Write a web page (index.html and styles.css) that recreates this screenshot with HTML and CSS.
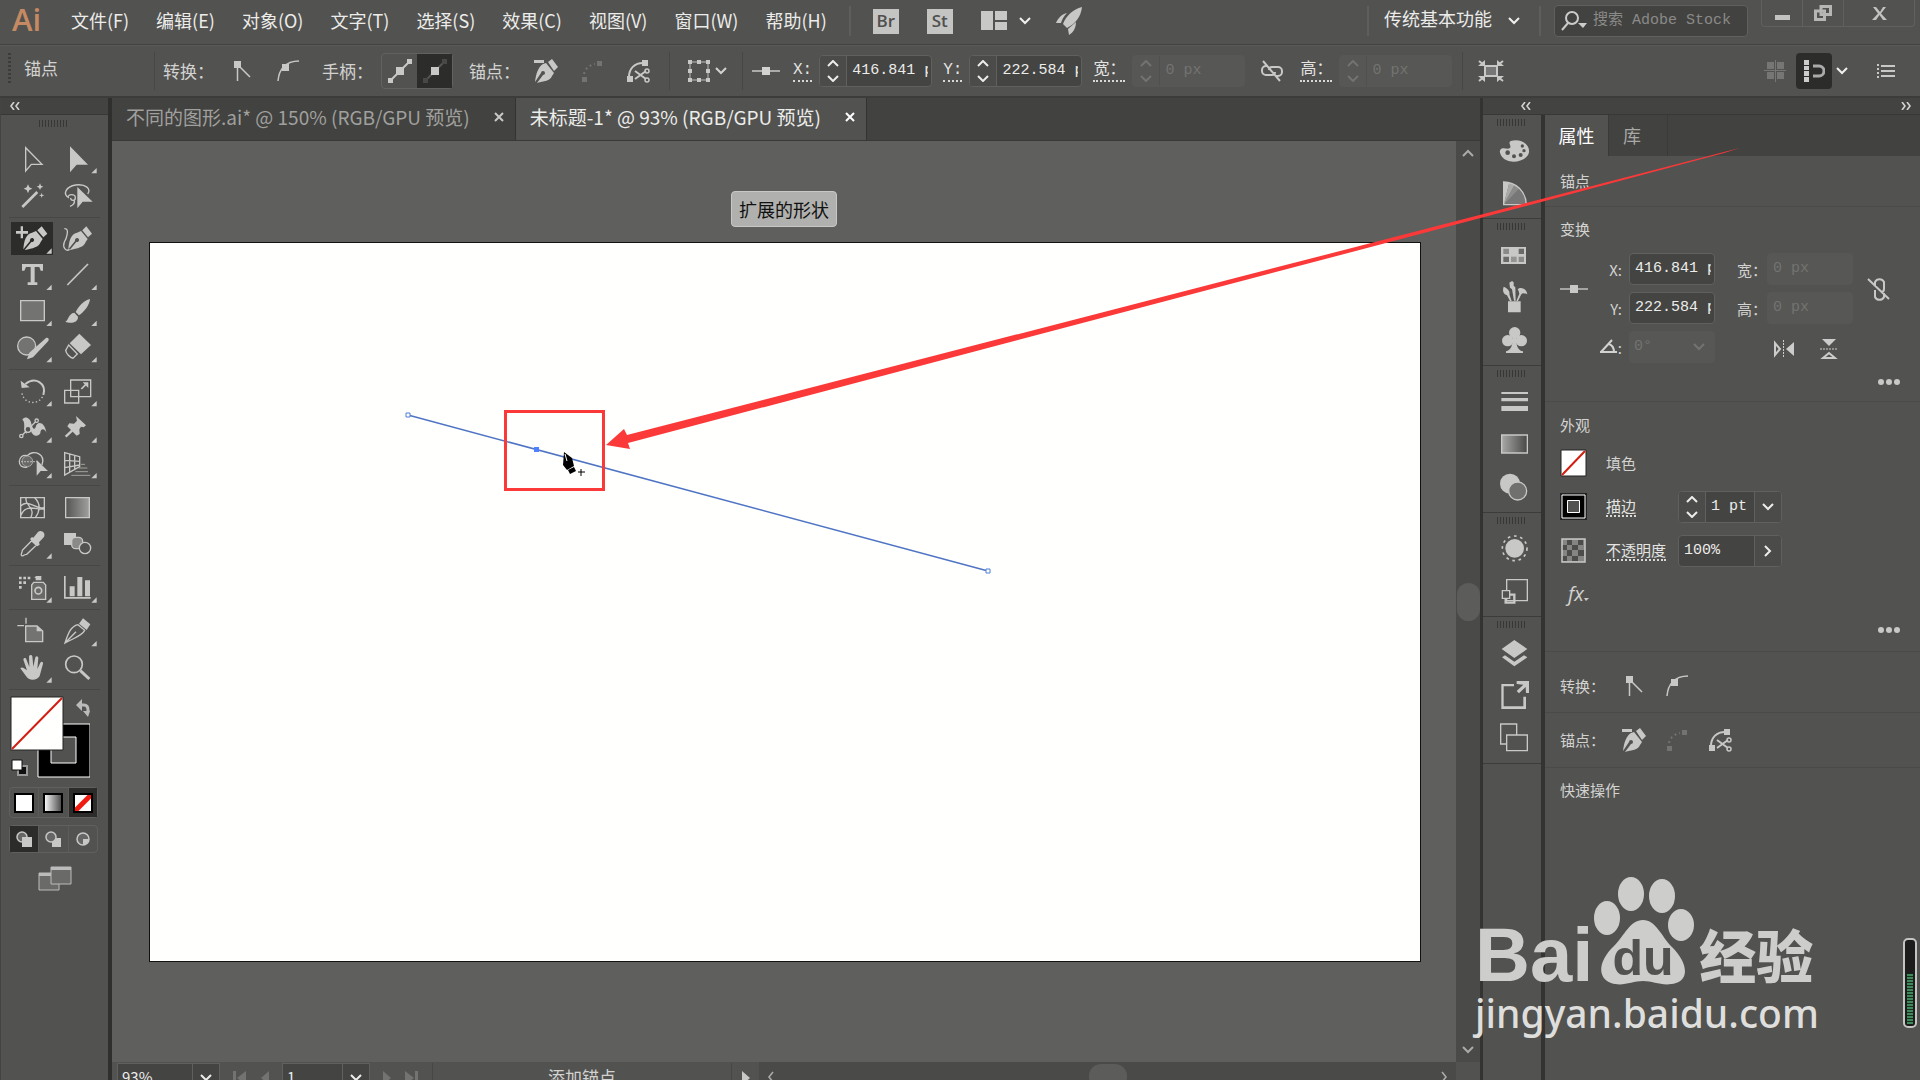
FILE: index.html
```html
<!DOCTYPE html>
<html lang="zh-CN">
<head>
  <meta charset="UTF-8">
  <meta name="viewport" content="width=device-width, initial-scale=1.0">
  <title>未标题-1* @ 93% (RGB/GPU 预览)</title>
  <link rel="stylesheet" href="styles.css">
</head>
<body>

<!-- shared icons -->
<svg class="sprite" aria-hidden="true">
  <symbol id="chev-down" viewBox="0 0 12 8"><path d="M1 1l5 5 5-5" fill="none" stroke="currentColor" stroke-width="2"/></symbol>
  <symbol id="chev-up" viewBox="0 0 12 8"><path d="M1 7l5-5 5 5" fill="none" stroke="currentColor" stroke-width="2"/></symbol>
  <symbol id="chev-left" viewBox="0 0 8 12"><path d="M6 1L2 6l4 5" fill="none" stroke="currentColor" stroke-width="1.6"/></symbol>
  <symbol id="chev-right" viewBox="0 0 8 12"><path d="M2 1l4 5-4 5" fill="none" stroke="currentColor" stroke-width="1.6"/></symbol>
  <symbol id="spin" viewBox="0 0 12 22"><path d="M1 6l5-5 5 5M1 16l5 5 5-5" fill="none" stroke="currentColor" stroke-width="2"/></symbol>
  <symbol id="dbl-left" viewBox="0 0 12 8"><path d="M5 0L2 4l3 4M10 0L7 4l3 4" fill="none" stroke="currentColor" stroke-width="1.6"/></symbol>
  <symbol id="dbl-right" viewBox="0 0 12 8"><path d="M2 0l3 4-3 4M7 0l3 4-3 4" fill="none" stroke="currentColor" stroke-width="1.6"/></symbol>
  <symbol id="corner" viewBox="0 0 24 24"><path d="M4 2h7v7H4z" fill="currentColor"/><path d="M7.500 8v14M9 7l11 11" fill="none" stroke="currentColor" stroke-width="1.500"/></symbol>
  <symbol id="smooth" viewBox="0 0 24 24"><path d="M6 5h7v7H6z" fill="currentColor"/><path d="M2 22C3 11 9 2 23 2" fill="none" stroke="currentColor" stroke-width="1.500"/></symbol>
  <symbol id="pen-minus" viewBox="0 0 24 24"><path d="M0 1h10v3H0zM14 3l4-3 6 8-4 4zM12 4l8 10-2 3c-2 5-8 5-15 7l6-8a2 2 0 1 0-2-2l-6 9C2 15 4 8 9 5z" fill="currentColor"/></symbol>
  <symbol id="connect" viewBox="0 0 24 24"><path d="M17 2h5v5h-5zM2 18h5v5H2z" fill="currentColor"/><path d="M4 15C5 10 9 6 15 5" fill="none" stroke="currentColor" stroke-width="2" stroke-dasharray="2 3"/></symbol>
  <symbol id="cut-path" viewBox="0 0 24 24"><path d="M16 1h6v6h-6zM1 17h6v6H1z" fill="currentColor"/><path d="M3 18C3 9 9 4 17 4M9 12l11 8M9 20l11-8" fill="none" stroke="currentColor" stroke-width="2"/><circle cx="21" cy="12" r="2" fill="none" stroke="currentColor" stroke-width="1.500"/><circle cx="21" cy="21" r="2" fill="none" stroke="currentColor" stroke-width="1.500"/></symbol>
  <symbol id="refpoint" viewBox="0 0 28 12"><path d="M0 5h28v2H0z" opacity=".7" fill="currentColor"/><path d="M10 2h8v8h-8z" fill="currentColor"/></symbol>
  <symbol id="unlink" viewBox="0 0 24 24"><path d="M8 7H6a4 4 0 0 0-4 4v1a4 4 0 0 0 4 4h6a3 3 0 0 0 3-3M16 17h2a4 4 0 0 0 4-4v-1a4 4 0 0 0-4-4h-6a3 3 0 0 0-3 3M3 2l17 20" fill="none" stroke="currentColor" stroke-width="2"/></symbol>
  <symbol id="more" viewBox="0 0 22 8"><circle cx="3" cy="4" r="3" fill="currentColor"/><circle cx="11" cy="4" r="3" fill="currentColor"/><circle cx="19" cy="4" r="3" fill="currentColor"/></symbol>
</svg>

<div class="app">

  <header class="menu-bar">
    <span class="logo">Ai</span>
    <nav class="menu">
      <a href="#">文件(F)</a>
      <a href="#">编辑(E)</a>
      <a href="#">对象(O)</a>
      <a href="#">文字(T)</a>
      <a href="#">选择(S)</a>
      <a href="#">效果(C)</a>
      <a href="#">视图(V)</a>
      <a href="#">窗口(W)</a>
      <a href="#">帮助(H)</a>
    </nav>
    <div class="app-links">
      <button class="app-link">Br</button>
      <button class="app-link">St</button>
      <button class="plain arrange" aria-label="排列文档">
        <svg width="26" height="20" viewBox="0 0 26 20"><path d="M0 0h12v19H0zM14 0h12v9H14zM14 11h12v8H14z" fill="#c8c8c6"/></svg>
        <svg class="bright" width="12" height="8"><use href="#chev-down"/></svg>
      </button>
      <button class="plain" aria-label="GPU 性能">
        <svg width="26" height="28" viewBox="0 0 26 28"><path d="M26 0c-9 2-16 9-19 17l4 4C19 17 25 10 26 0zM11 6C6 7 2 11 0 16h5c1-4 3-7 6-10zM20 15l-8 7 1 6c5-3 7-8 7-13z" fill="#c8c8c6"/></svg>
      </button>
    </div>
    <div class="menu-right">
      <label class="workspace">
        <select aria-label="工作区"><option>传统基本功能</option></select>
        <svg class="bright" width="12" height="8"><use href="#chev-down"/></svg>
      </label>
      <label class="search">
        <svg width="26" height="20" viewBox="0 0 26 20"><circle cx="11" cy="7" r="6" fill="none" stroke="#ccc" stroke-width="2"/><path d="M7 12l-6 7" stroke="#ccc" stroke-width="2"/><path d="M17 12h9l-4 5z" fill="#ccc"/></svg>
        <input type="text" placeholder="搜索 Adobe Stock">
      </label>
      <div class="win-buttons">
        <button aria-label="最小化"><svg width="15" height="16"><path d="M0 10h15v5H0z" fill="#c2c2c0"/></svg></button>
        <button aria-label="还原"><svg width="18" height="16" viewBox="0 0 18 16"><path d="M7 1.500h9.500v8H7zM1.500 6h9v8.500h-9z" fill="#525250" stroke="#b6b6b4" stroke-width="3"/></svg></button>
        <button class="wide" aria-label="关闭"><svg width="15" height="13" viewBox="0 0 15 13"><path d="M1 0h3l4 5 3-5h3L9 6.500l6 6.500h-4L7.500 8 4 13H0l6-6.500z" fill="#c2c2c0"/></svg></button>
      </div>
    </div>
  </header>

  <section class="control-bar">
    <div class="cb-title"><span class="grip-v"></span>锚点</div>
    <div class="cb-group cb-anchor">
      <span class="cb-label">转换：</span>
      <button class="icon-btn" aria-label="转换为尖角"><svg width="24" height="24"><use href="#corner"/></svg></button>
      <button class="icon-btn" aria-label="转换为平滑"><svg width="24" height="24"><use href="#smooth"/></svg></button>
      <span class="cb-label handles">手柄：</span>
      <div class="toggle">
        <button aria-label="显示手柄"><svg width="24" height="24" viewBox="0 0 24 24"><path d="M4 20L20 4" stroke="#c8c8c6" stroke-width="2"/><path d="M0 19h5v5H0zM19 0h5v5h-5zM8 8h8v8H8z" fill="#c8c8c6"/></svg></button>
        <button class="on" aria-label="隐藏手柄"><svg width="24" height="24" viewBox="0 0 24 24"><path d="M4 20L20 4" stroke="#555" stroke-width="2"/><path d="M0 19h5v5H0zM19 0h5v5h-5z" fill="#484846"/><path d="M8 8h8v8H8z" fill="#c8c8c6"/></svg></button>
      </div>
      <span class="cb-label points">锚点：</span>
      <button class="icon-btn" aria-label="删除锚点"><svg width="24" height="24"><use href="#pen-minus"/></svg></button>
      <button class="icon-btn off" disabled aria-label="连接"><svg width="24" height="24"><use href="#connect"/></svg></button>
      <button class="icon-btn" aria-label="剪切路径"><svg width="24" height="24"><use href="#cut-path"/></svg></button>
    </div>
    <div class="cb-group cb-bounds">
      <button class="plain" aria-label="对齐">
        <svg width="24" height="24" viewBox="0 0 24 24"><path d="M3 3h18v18H3z" fill="none" stroke="#999" stroke-width="1.500"/><path d="M1 1h4v4H1zM10 1h4v4h-4zM19 1h4v4h-4zM1 10h4v4H1zM19 10h4v4h-4zM1 19h4v4H1zM10 19h4v4h-4zM19 19h4v4h-4z" fill="#c8c8c6"/></svg>
        <svg width="12" height="8"><use href="#chev-down"/></svg>
      </button>
    </div>
    <div class="cb-group cb-pos">
      <svg width="28" height="12"><use href="#refpoint"/></svg>
      <label class="dotted" for="cb-x">X:</label>
      <div class="field">
        <button aria-label="调整 X"><svg width="12" height="22"><use href="#spin"/></svg></button>
        <input id="cb-x" type="text" value="416.841 px">
      </div>
      <label class="dotted" for="cb-y">Y:</label>
      <div class="field">
        <button aria-label="调整 Y"><svg width="12" height="22"><use href="#spin"/></svg></button>
        <input id="cb-y" type="text" value="222.584 px">
      </div>
      <label class="dotted" for="cb-w">宽：</label>
      <div class="field disabled">
        <button disabled aria-label="调整宽"><svg width="12" height="22"><use href="#spin"/></svg></button>
        <input id="cb-w" type="text" value="0 px" disabled>
      </div>
      <button class="plain link" aria-label="约束宽高"><svg width="24" height="24"><use href="#unlink"/></svg></button>
      <label class="dotted" for="cb-h">高：</label>
      <div class="field disabled">
        <button disabled aria-label="调整高"><svg width="12" height="22"><use href="#spin"/></svg></button>
        <input id="cb-h" type="text" value="0 px" disabled>
      </div>
    </div>
    <div class="cb-group cb-isolate">
      <button class="plain" aria-label="隔离选中的对象">
        <svg width="26" height="22" viewBox="0 0 26 22"><path d="M7 6h12v10H7z" fill="#777" stroke="#c8c8c6" stroke-width="2"/><path d="M1 1l5 4M25 1l-5 4M1 21l5-4M25 21l-5-4" stroke="#c8c8c6" stroke-width="2"/><path d="M7 0v6H0zM19 0v6h7zM7 22v-6H0zM19 22v-6h7z" fill="#c8c8c6"/></svg>
      </button>
    </div>
    <div class="cb-right">
      <svg width="22" height="22" viewBox="0 0 22 22"><path d="M3 2h7v7H3zM13 2h7v7h-7zM3 12h7v7H3zM13 12h7v7h-7zM11 0h1v22h-1zM0 10h22v1H0z" fill="#767674"/></svg>
      <button class="snap" aria-label="对齐像素"><svg width="22" height="22" viewBox="0 0 22 22"><path d="M1 0h5v5H1zM1 6h5v4H1zM1 11h5v5H1zM1 17h5v5H1z" fill="#ccc"/><path d="M10 6h6a5 5 0 0 1 0 10h-6" fill="none" stroke="#aaa" stroke-width="3"/></svg></button>
      <svg class="bright" width="12" height="8"><use href="#chev-down"/></svg>
      <button class="plain list" aria-label="面板菜单"><svg width="18" height="14" viewBox="0 0 18 14"><path d="M0 0h2v2H0zM4 1h14v2H4zM0 4h2v2H0zM4 6h14v2H4zM0 8h2v2H0zM4 11h14v2H4zM0 12h2v2H0z" fill="#c8c8c6"/></svg></button>
    </div>
  </section>

  <main class="workarea">

    <aside class="toolbox">
      <div class="strip"><svg width="12" height="8"><use href="#dbl-left"/></svg></div>
      <div class="grip tall"></div>
      <div class="tools">
        <button class="tool" title="选择工具"><svg viewBox="30 123 135 108"><path d="M77 143v70l17-20h32z" class="o"/></svg></button>
        <button class="tool" title="直接选择工具"><svg viewBox="165 123 135 108"><path d="M210 139v78l20-23h34z" class="f"/><path d="M290 204v16h-16z" class="f"/></svg></button>
        <button class="tool" title="魔棒工具"><svg viewBox="30 231 135 108"><path d="M67 321l45-45" class="o" stroke-width="8"/><path d="M84 253l4 9 9 4-9 4-4 10-4-10-9-4 9-4zM120 250l3 7 7 3-7 3-3 7-3-7-7-3 7-3zM125 278l2 6 6 2-6 2-2 6-2-6-6-2 6-2z" class="f"/></svg></button>
        <button class="tool" title="套索工具"><svg viewBox="165 231 135 108"><path d="M207 294c-20-12-10-34 20-39 30-4 48 12 36 27M204 293c-2-12 22-12 22 0 0 11-14 10-14 1M222 299c4 10-2 16-12 20" class="o"/><path d="M232 261v64l16-20h30z" class="f"/></svg></button>
      </div>
      <div class="tools">
        <button class="tool active" title="添加锚点工具"><svg viewBox="30 363 135 108"><path d="M62 379h7v14h15v8H69v14h-7v-14H48v-8h14zM112 391l13-12 17 22-12 11zM108 393l20 24-6 9c-5 16-24 19-48 24l20-24c8 2 12-8 4-12-6-1-9 4-8 9l-20 25c2-26 7-45 26-50z" class="f"/><path d="M155 445v16h-16z" class="f"/></svg></button>
        <button class="tool" title="曲率工具"><svg viewBox="165 363 135 108"><path d="M247 391l12-12 17 22-12 11zM243 393l20 24-6 9c-5 16-24 19-48 24l20-24c8 2 12-8 4-12-6-1-9 4-8 9l-20 25c2-26 7-45 26-50z" class="f"/><path d="M193 386c18-2 5 32 0 40-6 16 4 30 16 22" class="o"/></svg></button>
        <button class="tool" title="文字工具"><svg viewBox="30 471 135 108"><path d="M66 492h63v20h-7l-4-11h-14v46h8v8H83v-8h9v-46H78l-5 11h-7z" class="f"/><path d="M155 554v16h-16z" class="f"/></svg></button>
        <button class="tool" title="直线段工具"><svg viewBox="165 471 135 108"><path d="M202 555l62-63" class="o" stroke-width="5"/><path d="M290 554v16h-16z" class="f"/></svg></button>
        <button class="tool" title="矩形工具"><svg viewBox="30 579 135 108"><path d="M62 602h71v60H62z" class="o" fill="#737371"/><path d="M155 662v16h-16z" class="f"/></svg></button>
        <button class="tool" title="画笔工具"><svg viewBox="165 579 135 108"><path d="M270 597c-20 5-36 25-43 39l10 10c15-10 32-31 33-49zM223 638l11 12c1 19-24 22-38 15 10-4 8-24 27-27z" class="f"/><path d="M290 662v16h-16z" class="f"/></svg></button>
        <button class="tool" title="Shaper 工具"><svg viewBox="30 687 135 108"><circle cx="80" cy="738" r="27" class="o" fill="#737371"/><path d="M81 778l7-20 50-44c7-2 10 4 7 9l-46 49z" class="f"/><path d="M155 771v16h-16z" class="f"/></svg></button>
        <button class="tool" title="橡皮擦工具"><svg viewBox="165 687 135 108"><path d="M238 701l35 34-30 28-34-33z" class="f"/><path d="M206 735l26 27-13 13c-10-3-20-14-22-24z" class="o"/><path d="M290 771v16h-16z" class="f"/></svg></button>
      </div>
      <div class="tools">
        <button class="tool" title="旋转工具"><svg viewBox="30 819 135 108"><path d="M76 852c30-24 64-2 54 33" class="o" stroke-width="6"/><path d="M62 842l3 22 24-2z" class="f"/><path d="M66 880c6 32 50 38 63 7" class="o" stroke-dasharray="4 7"/><path d="M155 903v16h-16z" class="f"/></svg></button>
        <button class="tool" title="比例缩放工具"><svg viewBox="165 819 135 108"><path d="M212 840h60v50h-60zM194 871h42v38h-42z" class="o"/><path d="M244 867l13-13" class="o" stroke-width="5"/><path d="M248 847h17v17z" class="f"/><path d="M290 903v16h-16z" class="f"/></svg></button>
        <button class="tool" title="宽度工具"><svg viewBox="30 927 135 108"><path d="M67 959c8-13 24-5 27 12 3 13 9 21 13 10 4-20 28-16 32 17-4-13-18-15-18 2-8 14-26 5-28-8-2-9-12-8-13 9-14-6-1-34-13-42z" class="f"/><path d="M64 1008l45-45" class="o"/><circle cx="64" cy="1008" r="5" class="o" fill="#525250"/><circle cx="84" cy="988" r="9" class="o" fill="#525250"/><circle cx="110" cy="962" r="5" class="o" fill="#525250"/><path d="M155 1012v16h-16z" class="f"/></svg></button>
        <button class="tool" title="操控变形工具"><svg viewBox="165 927 135 108"><path d="M228 948l30 28-7 6-8-2-5 8 1 14-9 5-28-28 6-9 14 1 9-9-2-9z" class="f"/><path d="M217 991l-20 19" class="o" stroke-width="7"/><path d="M290 1012v16h-16z" class="f"/></svg></button>
        <button class="tool" title="形状生成器工具"><svg viewBox="30 -15 135 108"><path d="M82 51c-34 8-30-42 0-34 18-20 56-6 44 28" class="o"/><circle cx="82" cy="34" r="16" class="o" stroke-width="2" fill="#6a6a68"/><path d="M64 35h50" class="o" stroke-dasharray="4 5"/><path d="M110 30v47l12-14h22z" class="f"/><path d="M155 69v16h-16z" class="f"/></svg></button>
        <button class="tool" title="透视网格工具"><svg viewBox="165 -15 135 108"><path d="M194 8l45 12v30l-45 25zM209 12v55M224 16v43M194 31l45 3M194 53l45-8" class="o"/><path d="M243 43h12M236 54h26M226 65h38M214 76h57" class="o" stroke-width="2"/><path d="M290 69v16h-16z" class="f"/></svg></button>
      </div>
      <div class="tools">
        <button class="tool" title="网格工具"><svg viewBox="30 117 135 108"><path d="M62 143h71v60H62zM62 168c25-25 48 16 71 4M62 197c17-40 50-15 71-20M79 143c-10 20 30 30 13 60M104 143c20 20 16 40 2 60" class="o"/></svg></button>
        <button class="tool" title="渐变工具"><svg viewBox="165 117 135 108"><defs><linearGradient id="g1"><stop stop-color="#555553"/><stop offset="1" stop-color="#a0a09e"/></linearGradient></defs><path d="M197 143h71v60h-71z" class="o" fill="url(#g1)"/></svg></button>
        <button class="tool" title="吸管工具"><svg viewBox="30 225 135 108"><path d="M100 263l14-17c10-8 24 3 18 15l-15 16 2 7-7 5-22-22 6-6z" class="f"/><path d="M95 272l14 14-29 27c-12 1-9 7-15 4-5-3 2-7 2-16z" class="o"/><path d="M155 310v16h-16z" class="f"/></svg></button>
        <button class="tool" title="混合工具"><svg viewBox="165 225 135 108"><path d="M192 249h36v36h-36z" class="f"/><rect x="215" y="262" width="33" height="34" rx="12" class="o" fill="#8a8a88"/><circle cx="255" cy="294" r="17" class="o" fill="#525250"/></svg></button>
      </div>
      <div class="tools">
        <button class="tool" title="符号喷枪工具"><svg viewBox="30 357 135 108"><path d="M57 380h8v8h-8zM70 380h8v8h-8zM83 380h8v8h-8zM57 394h8v8h-8zM70 394h8v8h-8zM57 408h8v8h-8zM103 382l6-4h15v13h-17v-6z" class="f"/><path d="M101 397h29l7 8v43H95v-43z" class="o" fill="#696967"/><circle cx="115" cy="422" r="10" class="o" stroke-width="5"/><path d="M155 442v16h-16z" class="f"/></svg></button>
        <button class="tool" title="柱形图工具"><svg viewBox="165 357 135 108"><path d="M192 378h5v63h75v5h-80zM209 409h15v30h-15zM232 381h15v58h-15zM255 391h15v48h-15z" class="f"/><path d="M290 442v16h-16z" class="f"/></svg></button>
      </div>
      <div class="tools">
        <button class="tool" title="画板工具"><svg viewBox="30 489 135 108"><path d="M77 528h34l17 15v32H77z" class="o" fill="#737371"/><path d="M110 527l19 17h-19zM52 525h20v4H52zM76 503h4v18h-4z" class="f"/></svg></button>
        <button class="tool" title="切片工具"><svg viewBox="165 489 135 108"><path d="M249 505l22 18-11 17-23-19z" class="f"/><path d="M234 524l20 17c-8 16-28 21-59 38 10-30 17-50 39-55zM195 579l33-34" class="o"/><path d="M290 573v16h-16z" class="f"/></svg></button>
        <button class="tool" title="抓手工具"><svg viewBox="30 597 135 108"><path d="M61 655c5-6 12 0 20 6l-11-32c2-7 8-5 9-1l9 23-1-32c2-5 8-5 10 0l3 31 6-28c3-6 9-3 9 2l-3 33 9-19c3-5 9-3 8 3l-10 37c-7 14-34 15-41 0z" class="f"/><path d="M155 682v16h-16z" class="f"/></svg></button>
        <button class="tool" title="缩放工具"><svg viewBox="165 597 135 108"><circle cx="222" cy="643" r="25" class="o" stroke-width="5"/><path d="M241 662l27 25" class="o" stroke-width="9"/></svg></button>
      </div>

      <div class="paint">
        <svg width="80" height="82" viewBox="0 0 80 82">
          <path d="M28 28h52v53H28z" fill="#000" stroke="#fff"/>
          <path d="M41 41h25v26H41z" fill="#525250" stroke="#fff"/>
          <path d="M1 1h52v53H1z" fill="#fffffd" stroke="#222"/>
          <path d="M2 53L52 2" stroke="#d21d12" stroke-width="2"/>
          <path d="M71 9h3q4 0 4 5v2" fill="none" stroke="#bbb" stroke-width="3"/><path d="M66 9l6-6v12zM78 21l-5-6h7z" fill="#bbb"/>
          <path d="M8 70h9v9H8z" fill="#111" stroke="#999" stroke-width="2"/>
          <path d="M2 64h10v10H2z" fill="#fff" stroke="#111"/>
        </svg>
      </div>
      <div class="segmented">
        <button title="颜色"><svg width="20" height="20"><path d="M1 1h18v18H1z" fill="#fff" stroke="#000" stroke-width="2"/></svg></button>
        <button title="渐变"><svg width="20" height="20"><defs><linearGradient id="g2"><stop stop-color="#fff"/><stop offset="1" stop-color="#444"/></linearGradient></defs><path d="M1 1h18v18H1z" fill="url(#g2)" stroke="#000" stroke-width="2"/></svg></button>
        <button class="on" title="无"><svg width="20" height="20"><path d="M1 1h18v18H1z" fill="#fff"/><path d="M2 18L18 2" stroke="#f01b10" stroke-width="5"/><path d="M1 1h18v18H1z" fill="none" stroke="#000" stroke-width="2"/></svg></button>
      </div>
      <div class="segmented modes">
        <button class="on" title="正常绘图"><svg width="16" height="16"><circle cx="6" cy="6" r="5" fill="#666" stroke="#c8c8c6" stroke-width="1.500"/><path d="M6 6h10v10H6z" fill="#c8c8c6"/></svg></button>
        <button title="背面绘图"><svg width="16" height="16"><path d="M7 7h9v9H7z" fill="#c8c8c6"/><circle cx="6" cy="6" r="5" fill="#666" stroke="#c8c8c6" stroke-width="1.500"/></svg></button>
        <button title="内部绘图"><svg width="14" height="14"><circle cx="7" cy="7" r="6" fill="#666" stroke="#c8c8c6" stroke-width="1.500"/><path d="M7 7h6q-1 5-6 6z" fill="#c8c8c6"/></svg></button>
      </div>
      <button class="plain screen-mode" title="更改屏幕模式"><svg width="34" height="26" viewBox="0 0 34 26"><path d="M1 7h20v17H1z" fill="#6a6a68" stroke="#bbb"/><path d="M1 7h20v3H1z" fill="#bbb"/><path d="M13 1h20v17H13z" fill="#6a6a68" stroke="#bbb"/><path d="M13 1h20v3H13z" fill="#bbb"/></svg></button>
    </aside>

    <section class="document">
      <div class="doc-tabs">
        <div class="doc-tab"><a href="#">不同的图形.ai* @ 150% (RGB/GPU 预览)</a><button aria-label="关闭"><svg width="10" height="10"><path d="M1 1l8 8M9 1L1 9" stroke="currentColor" stroke-width="2"/></svg></button></div>
        <div class="doc-tab current"><a href="#">未标题-1* @ 93% (RGB/GPU 预览)</a><button aria-label="关闭"><svg width="10" height="10"><path d="M1 1l8 8M9 1L1 9" stroke="currentColor" stroke-width="2"/></svg></button></div>
      </div>
      <div class="viewport">
        <div class="canvas">
          <div class="artboard">
            <svg class="drawing" width="860" height="400" viewBox="0 0 860 400">
              <path d="M258 172L838 328" stroke="#4f74c4" stroke-width="1.500"/>
              <path d="M256 170h4v4h-4zM836 326h4v4h-4z" fill="#fff" stroke="#4f80d8"/>
              <path d="M384 204h5v5h-5z" fill="#4f80ff"/>
              <!-- pen cursor -->
              <path d="M414 209l8 6 2 8-7 4-4-5zM418 227l6-3 2 4-6 3z" fill="#000"/>
              <path d="M415 211l2 7" stroke="#fff"/>
              <path d="M431 226v7M428 229h7" stroke="#000"/>
            </svg>
          </div>
          <div class="toast">扩展的形状</div>
        </div>
        <div class="scroll-v">
          <svg width="12" height="8"><use href="#chev-up"/></svg>
          <div class="thumb"></div>
          <svg width="12" height="8"><use href="#chev-down"/></svg>
        </div>
      </div>
      <footer class="status">
        <div class="combo zoom"><input type="text" value="93%" aria-label="缩放"><button aria-label="缩放级别"><svg width="12" height="8"><use href="#chev-down"/></svg></button></div>
        <div class="pager">
          <svg width="14" height="14"><path d="M0 0h3v14H0zM13 0v14L4 7z" fill="currentColor"/></svg>
          <svg width="8" height="14"><path d="M8 0v14L0 7z" fill="currentColor"/></svg>
        </div>
        <div class="combo page"><input type="text" value="1" aria-label="画板"><button aria-label="画板导航"><svg width="12" height="8"><use href="#chev-down"/></svg></button></div>
        <div class="pager">
          <svg width="8" height="14"><path d="M0 0v14l8-7z" fill="currentColor"/></svg>
          <svg width="14" height="14"><path d="M0 0v14l9-7zM10 0h3v14h-3z" fill="currentColor"/></svg>
        </div>
        <div class="status-text">添加锚点</div>
        <button class="plain play" aria-label="状态栏菜单"><svg width="8" height="14"><path d="M0 0v14l8-7z" fill="#c8c8c6"/></svg></button>
        <div class="scroll-h">
          <svg width="8" height="12"><use href="#chev-left"/></svg>
          <div class="thumb"></div>
          <svg width="8" height="12"><use href="#chev-right"/></svg>
        </div>
      </footer>
    </section>

    <section class="side">
      <div class="strip side-strip">
        <svg width="12" height="8"><use href="#dbl-left"/></svg>
        <svg width="12" height="8"><use href="#dbl-right"/></svg>
      </div>
      <div class="side-body">
        <div class="dock">
          <div class="dock-group">
            <div class="grip"></div>
            <button title="颜色"><svg viewBox="132 93 171 129"><path fill-rule="evenodd" d="M181 149c8-9 20 1 29-5 5-7-7-15 2-21 30-9 58 10 55 34-5 30-68 40-84 9-3-6-5-12-2-17zm15 9a7 7 0 1 0 14 0 7 7 0 1 0-14 0zm20 11a6 6 0 1 0 12 0 6 6 0 1 0-12 0zm20-4a6 6 0 1 0 12 0 6 6 0 1 0-12 0zm11-13a5 5 0 1 0 10 0 5 5 0 1 0-10 0zm-5-14a5 5 0 1 0 10 0 5 5 0 1 0-10 0z" class="f"/></svg></button>
            <button title="颜色参考"><svg viewBox="132 222 171 129"><path d="M191 245c36 0 67 28 68 69h-68z" fill="#777"/><path d="M191 314V246l17 2z" class="f"/><path d="M191 314l17-66 16 6z" fill="#aaa"/><path d="M191 314l33-60 14 11z" fill="#8c8c8a"/><path d="M191 246c36 0 67 28 68 68h-68z" class="o"/></svg></button>
          </div>
          <div class="dock-group">
            <div class="grip"></div>
            <button title="色板"><svg viewBox="132 405 171 129"><path d="M183 441h75v51h-75z" class="f"/><path d="M190 446h17v16h-17zM236 470h16v16h-16z" fill="#8a8a88"/><path d="M236 446h16v16h-16zM190 470h17v16h-17z" fill="#6a6a68"/><path d="M213 470h17v16h-17z" fill="#939391"/></svg></button>
            <button title="画笔"><svg viewBox="132 534 171 129"><path d="M204 604h38v33h-38zM191 560c12 4 20 15 17 23l7 20h-5l-9-17c-12-3-14-15-10-26zM208 548l8-5 5 4v10l5 5 1 40h-5l-6-34-6-5zM233 568c8-9 27-3 29 15-8-3-14-5-18 0l-10 20h-5l9-22c-2-4-1-8-5-13z" class="f"/></svg></button>
            <button title="符号"><svg viewBox="132 663 171 129"><circle cx="224" cy="698" r="17" class="f"/><circle cx="203" cy="722" r="17" class="f"/><circle cx="244" cy="722" r="17" class="f"/><path d="M219 708h9c0 30 6 44 21 46v5h-51v-5c15-3 20-17 21-46z" class="f"/></svg></button>
          </div>
          <div class="dock-group">
            <div class="grip"></div>
            <button title="描边"><svg viewBox="132 846 171 129"><path d="M184 876h80v6h-80zM184 894h80v10h-80zM184 918h80v15h-80z" class="f"/></svg></button>
            <button title="渐变"><svg viewBox="132 -15 171 129"><defs><linearGradient id="g3"><stop stop-color="#a8a8a6"/><stop offset="1" stop-color="#484846"/></linearGradient></defs><path d="M185 15h77v54h-77z" class="o" fill="url(#g3)"/></svg></button>
            <button title="透明度"><svg viewBox="132 114 171 129"><circle cx="210" cy="161" r="30" class="f"/><circle cx="233" cy="183" r="27" class="o" fill="#70706e"/></svg></button>
          </div>
          <div class="dock-group">
            <div class="grip"></div>
            <button title="外观"><svg viewBox="132 297 171 129"><circle cx="224" cy="355" r="28" class="f"/><circle cx="224" cy="355" r="37" class="o" stroke-width="5" stroke-dasharray="8 11"/></svg></button>
            <button title="图形样式"><svg viewBox="132 426 171 129"><path d="M200 449h62v63h-62z" class="o"/><path d="M197 494h26v24h-26z" class="o" stroke-width="7"/><path d="M187 482h22v23h-22z" class="o" fill="#525250"/></svg></button>
          </div>
          <div class="dock-group">
            <div class="grip"></div>
            <button title="图层"><svg viewBox="132 609 171 129"><path d="M223 630l39 27-39 27-38-27zM186 682l9-6 28 19 29-19 10 6-39 27z" class="f"/></svg></button>
            <button title="资源导出"><svg viewBox="132 738 171 129"><path d="M184 762h38v7h-31v60h59v-29h8v37h-74zM230 753h37v36h-9l-1-18-20 19-7-7 20-19-20-2z" class="f"/></svg></button>
            <button title="画板"><svg viewBox="132 867 171 129"><path d="M182 882h48v60h-48z" class="o"/><path d="M200 915h62v47h-62z" class="o" fill="#525250"/></svg></button>
          </div>
        </div>

        <div class="properties">
          <div class="prop-tabs">
            <button class="current">属性</button>
            <button>库</button>
          </div>
          <section class="prop anchor-type">锚点</section>
          <section class="prop transform">
            <h3>变换</h3>
            <div class="transform-grid">
              <svg class="ref" width="28" height="12"><use href="#refpoint"/></svg>
              <label for="p-x">X:</label>
              <div class="field"><input id="p-x" type="text" value="416.841 px"></div>
              <label for="p-w">宽：</label>
              <div class="field disabled"><input id="p-w" type="text" value="0 px" disabled></div>
              <button class="plain prop-link" aria-label="约束宽高"><svg width="24" height="28" viewBox="0 0 24 28"><path d="M8 11V7a5 5 0 0 1 9 0v7a3 3 0 0 1-3 3M17 18v4a5 5 0 0 1-9 0v-7M1 4l21 20" fill="none" stroke="#c8c8c6" stroke-width="2"/></svg></button>
              <label for="p-y">Y:</label>
              <div class="field"><input id="p-y" type="text" value="222.584 px"></div>
              <label for="p-h">高：</label>
              <div class="field disabled"><input id="p-h" type="text" value="0 px" disabled></div>
              <label class="angle" for="p-a"><svg width="18" height="15" viewBox="0 0 18 15"><path d="M1 14L12 2M0 14h17M9 6q5 2 5 8" fill="none" stroke="currentColor" stroke-width="2"/></svg>:</label>
              <div class="field disabled"><select id="p-a" disabled><option>0°</option></select><svg width="12" height="8"><use href="#chev-down"/></svg></div>
              <div class="flips">
                <button class="plain" aria-label="水平翻转"><svg width="22" height="20" viewBox="0 0 22 20"><path d="M2 4v12l5-6z" fill="none" stroke="#ccc" stroke-width="2"/><path d="M21 3v14l-8-7z" fill="#ccc"/><path d="M10.500 1v18" stroke="#ccc" stroke-dasharray="2 1"/></svg></button>
                <button class="plain" aria-label="垂直翻转"><svg width="20" height="22" viewBox="0 0 20 22"><path d="M3 1h14l-7 7z" fill="#ccc"/><path d="M4 20h12l-6-5z" fill="none" stroke="#ccc" stroke-width="2"/><path d="M1 11h18" stroke="#ccc" stroke-dasharray="2 1"/></svg></button>
              </div>
            </div>
            <button class="plain more" aria-label="更多选项"><svg width="22" height="8"><use href="#more"/></svg></button>
          </section>
          <section class="prop appearance">
            <h3>外观</h3>
            <div class="row">
              <svg width="28" height="28"><path d="M1 1h25v26H1z" fill="#fff" stroke="#222"/><path d="M2 26L25 2" stroke="#d21d12" stroke-width="2"/></svg>
              <span class="name">填色</span>
            </div>
            <div class="row">
              <svg width="28" height="28"><path d="M0 0h27v27H0z" fill="#222"/><path d="M2 2h23v23H2z" fill="#000" stroke="#fff"/><path d="M7.500 7.500h12v12h-12z" fill="#525250" stroke="#fff"/></svg>
              <label class="name dotted" for="p-s">描边</label>
              <div class="field stroke">
                <button aria-label="调整描边"><svg width="12" height="22"><use href="#spin"/></svg></button>
                <input id="p-s" type="text" value="1 pt">
                <button aria-label="描边粗细"><svg width="12" height="8"><use href="#chev-down"/></svg></button>
              </div>
            </div>
            <div class="row">
              <svg width="28" height="28" viewBox="0 0 28 28"><path d="M2 2h23v23H2z" fill="#858583"/><path d="M7 3h5v5H7zM18 3h5v5h-5zM2 8h5v5H2zM12 8h6v5h-6zM7 13h5v6H7zM18 13h6v6h-6zM2 19h5v5H2zM12 19h6v5h-6z" fill="#4c4c4a"/><path d="M2 2h23v23H2z" fill="none" stroke="#c8c8c6" stroke-width="1.500"/></svg>
              <label class="name dotted" for="p-o">不透明度</label>
              <div class="field opacity">
                <input id="p-o" type="text" value="100%">
                <button aria-label="不透明度滑块"><svg width="8" height="12" viewBox="0 0 8 12"><path d="M1 1l5 5-5 5" fill="none" stroke="currentColor" stroke-width="2"/></svg></button>
              </div>
            </div>
            <button class="plain fx">fx<svg width="5" height="3"><path d="M0 0h5L2 3z" fill="#ccc"/></svg></button>
            <button class="plain more" aria-label="更多选项"><svg width="22" height="8"><use href="#more"/></svg></button>
          </section>
          <section class="prop icons convert">
            <span>转换：</span>
            <button class="icon-btn" aria-label="转换为尖角"><svg width="24" height="24"><use href="#corner"/></svg></button>
            <button class="icon-btn" aria-label="转换为平滑"><svg width="24" height="24"><use href="#smooth"/></svg></button>
          </section>
          <section class="prop icons">
            <span>锚点：</span>
            <button class="icon-btn" aria-label="删除锚点"><svg width="24" height="24"><use href="#pen-minus"/></svg></button>
            <button class="icon-btn off" disabled aria-label="连接"><svg width="24" height="24"><use href="#connect"/></svg></button>
            <button class="icon-btn" aria-label="剪切路径"><svg width="24" height="24"><use href="#cut-path"/></svg></button>
          </section>
          <section class="prop quick">快速操作</section>
        </div>
      </div>
    </section>
  </main>

  <!-- annotation over the window -->
  <div class="mark-box"></div>
  <svg class="mark-arrow" width="1140" height="310" viewBox="0 0 1140 310">
    <path d="M2 297l18-16 3 6L926 54 1120 4l16-4-16 5L926 57 24 295l2 6z" fill="#fb3939"/>
  </svg>

  <div class="watermark">
    <div class="wm-brand">
      <span class="wm-bai">Bai</span>
      <svg class="wm-paw" width="106" height="110" viewBox="0 0 106 110">
        <ellipse cx="14" cy="42" rx="13" ry="17"/>
        <ellipse cx="38" cy="18" rx="13" ry="17"/>
        <ellipse cx="69" cy="20" rx="13" ry="17"/>
        <ellipse cx="88" cy="49" rx="13" ry="16"/>
        <path d="M50 44c13 0 18 16 29 27 16 16 17 32 4 36-13 4-22-2-33-2s-20 6-32 2c-14-5-13-22 3-37 11-11 16-26 29-26z"/>
        <text x="50" y="99" text-anchor="middle">du</text>
      </svg>
      <span class="wm-cn">经验</span>
    </div>
    <div class="wm-url">jingyan.baidu.com</div>
  </div>

  <div class="meter"><div class="meter-level"></div></div>
</div>

</body>
</html>
```

FILE: styles.css
```css
* {
  box-sizing: border-box;
}
body {
  margin: 0;
  background-color: #525250;
  color: #d2d2d0;
  font-family: "Noto Sans CJK SC", sans-serif;
  font-size: 15px;
  line-height: 20px;
}
button, input, select {
  font: inherit;
  color: inherit;
  background: none;
  border: none;
  border-radius: 0;
  padding: 0;
  margin: 0;
  min-width: 0;
}
button {
  display: flex;
  align-items: center;
  justify-content: center;
}
select {
  appearance: none;
}
a {
  color: inherit;
  text-decoration: none;
  white-space: nowrap;
}
svg {
  flex: none;
  display: block;
}
h3 {
  margin: 0;
  font-size: 15px;
  font-weight: normal;
}
.sprite {
  position: absolute;
  width: 0;
  height: 0;
}
.app {
  position: relative;
  display: flex;
  flex-direction: column;
  height: 100vh;
  overflow: hidden;
}
.bright {
  color: #f0f0ee;
}
.f {
  fill: #c8c8c6;
}
.o {
  stroke: #c8c8c6;
  stroke-width: 4;
}
.o:not([fill]) {
  fill: none;
}
.o[stroke-width="2"] { stroke-width: 2; }
.o[stroke-width="5"] { stroke-width: 5; }
.o[stroke-width="6"] { stroke-width: 6; }
.o[stroke-width="7"] { stroke-width: 7; }
.o[stroke-width="8"] { stroke-width: 8; }
.o[stroke-width="9"] { stroke-width: 9; }

/* menu bar */
.menu-bar {
  flex: none;
  display: flex;
  height: 45px;
  border-bottom: 1px solid #424240;
  font-size: 18px;
}
.logo {
  width: 71px;
  padding: 3px 0 0 12px;
  color: #c58a62;
  font-family: "Open Sans", "Noto Sans", sans-serif;
  font-size: 31px;
  font-weight: 600;
  line-height: 32px;
}
.menu {
  display: flex;
  align-items: center;
  gap: 27px;
  padding-bottom: 5px;
  padding-right: 22px;
  color: #ececea;
}
.app-links {
  display: flex;
  align-items: center;
  gap: 25px;
  height: 30px;
  margin-top: 6px;
  padding-left: 22px;
  border-left: 2px solid #5e5e5c;
}
.app-link {
  width: 26px;
  height: 25px;
  background-color: #c4c4c2;
  color: #50504e;
  font-family: "Open Sans", "Noto Sans", sans-serif;
  font-size: 17px;
  font-weight: 600;
  margin-right: 3px;
}
.arrange {
  gap: 12px;
}
.menu-right {
  display: flex;
  align-items: flex-start;
  margin-left: auto;
  padding-right: 5px;
}
.workspace {
  display: flex;
  align-items: center;
  gap: 16px;
  height: 30px;
  margin-top: 6px;
  padding: 0 19px 0 15px;
  border-left: 2px solid #5e5e5c;
  border-right: 2px solid #5e5e5c;
}
.workspace select {
  height: 30px;
  padding-bottom: 7px;
  color: #ececea;
}
.search {
  display: flex;
  align-items: center;
  width: 194px;
  height: 32px;
  margin: 5px 13px 0 13px;
  padding-left: 6px;
  border: 1px solid #60605e;
  border-radius: 4px;
  background-color: #424240;
}
.search input {
  flex: 1;
  padding-left: 6px;
  font-family: "Liberation Mono", "Noto Sans CJK SC", monospace;
  font-size: 15px;
}
.search input::placeholder {
  color: #8a8a88;
}
.win-buttons {
  display: flex;
  height: 27px;
  border: 1px solid #60605e;
  border-top: none;
  border-radius: 0 0 4px 4px;
}
.win-buttons button {
  width: 41px;
  border-right: 1px solid #60605e;
}
.win-buttons .wide {
  width: 70px;
  border-right: none;
}

/* control bar */
.control-bar {
  flex: none;
  display: flex;
  align-items: center;
  height: 53px;
  border-top: 1px solid #5a5a58;
  border-bottom: 2px solid #3c3c3a;
  font-size: 17px;
}
.cb-title {
  display: flex;
  align-items: center;
  gap: 13px;
  width: 154px;
  height: 38px;
  padding: 0 0 6px 8px;
}
.grip-v {
  width: 3px;
  height: 30px;
  background: repeating-linear-gradient(#3c3c3a 0 2px, transparent 2px 4px);
}
.cb-group {
  display: flex;
  align-items: center;
  height: 38px;
  border-left: 1px solid #474745;
}
.cb-anchor {
  padding: 0 8px;
}
.cb-label {
  width: 56px;
  font-family: "Noto Sans CJK TC", "Noto Sans CJK SC", sans-serif;
  white-space: nowrap;
}
.cb-label.handles {
  width: 59px;
  margin-left: 11px;
}
.cb-label.points {
  width: 54px;
  margin-left: 16px;
}
.icon-btn {
  width: 46px;
  height: 36px;
  color: #c8c8c6;
}
.icon-btn.off {
  color: #737371;
}
.toggle {
  display: flex;
  height: 36px;
  border: 1px solid #62625f;
  border-radius: 4px;
}
.toggle button {
  width: 35px;
}
.toggle .on {
  background-color: #2c2c2a;
}
.cb-bounds {
  width: 73px;
  padding-left: 17px;
}
.cb-bounds .plain {
  gap: 4px;
}
.cb-pos {
  padding: 0 10px 0 9px;
}
.cb-pos .dotted {
  margin: 0 7px 0 11px;
  font-family: "Liberation Mono", "Noto Sans CJK TC", monospace;
  font-size: 16px;
  white-space: nowrap;
}
.cb-pos .dotted:first-of-type {
  margin-left: 13px;
}
.dotted {
  border-bottom: 2px dotted #d8d8d6;
  color: #e4e4e2;
}
.cb-pos .field {
  width: 113px;
}
.cb-pos .link {
  margin: 0 5px 0 15px;
  color: #c8c8c6;
}
.cb-isolate {
  padding-left: 15px;
}
.cb-right {
  display: flex;
  align-items: center;
  margin-left: auto;
  padding-right: 25px;
}
.snap {
  width: 36px;
  height: 36px;
  margin: 0 4px 0 10px;
  border-radius: 4px;
  background-color: #2c2c2a;
}
.list {
  margin-left: 29px;
}

/* text fields */
.field {
  display: flex;
  height: 32px;
  border: 1px solid #60605e;
  border-radius: 4px;
  background-color: #444442;
  color: #ececea;
  font-family: "Liberation Mono", "Noto Sans CJK SC", monospace;
  font-size: 15px;
  overflow: hidden;
}
.field input {
  flex: 1;
  width: 0;
  padding: 0 3px 1px 5px;
}
.field button {
  flex: none;
  width: 27px;
  border-right: 1px solid #60605e;
  background-color: #4b4b49;
}
.field input + button {
  border-right: none;
  border-left: 1px solid #60605e;
}
.field.disabled {
  border-color: #575755;
  background-color: #575755;
  color: #737371;
}
.field.disabled button {
  background: none;
  border-color: #50504e;
}

/* work area */
.workarea {
  flex: 1;
  display: flex;
  min-height: 0;
}
.strip {
  height: 17px;
  padding: 4px 0 0 8px;
  border-bottom: 1px solid #383836;
  background-color: #434341;
}
.grip {
  height: 16px;
  background: repeating-linear-gradient(90deg, #373735 0 1px, transparent 1px 3px) 14px 4px / 29px 7px no-repeat;
}

/* toolbox */
.toolbox {
  flex: none;
  width: 112px;
  border-left: 1px solid #444442;
  border-right: 4px solid #2f2f2d;
}
.grip.tall {
  height: 23px;
  background-position: 38px 5px;
}
.tools {
  display: grid;
  grid-template-columns: 45px 45px;
  grid-auto-rows: 36px;
  margin: 0 8px;
  padding: 3px 0 4px 1px;
  border-bottom: 1px solid #474745;
}
.tool svg {
  width: 45px;
  height: 36px;
}
.tool.active {
  background: linear-gradient(#2c2c2a, #2c2c2a) 1px 1px / 42px 33px no-repeat;
}
.paint {
  padding: 6px 0 8px 9px;
}
.segmented {
  display: flex;
  width: 89px;
  height: 31px;
  margin: 1px 0 7px 8px;
  border: 1px solid #60605e;
  border-radius: 4px;
}
.segmented button {
  flex: 1;
  border-right: 1px solid #5c5c5a;
}
.segmented button:last-child {
  border-right: none;
}
.segmented .on {
  background-color: #2c2c2a;
}
.segmented.modes {
  height: 28px;
}
.screen-mode {
  margin: 13px 0 0 37px;
}

/* document */
.document {
  flex: 1;
  display: flex;
  flex-direction: column;
  min-width: 0;
}
.doc-tabs {
  flex: none;
  display: flex;
  height: 43px;
  border-bottom: 1px solid #393937;
  background-color: #424240;
  font-size: 19px;
}
.doc-tab {
  display: flex;
  align-items: center;
  gap: 24px;
  padding: 0 11px 4px 14px;
  border-right: 1px solid #333331;
  color: #a0a09e;
}
.doc-tab button {
  color: #c8c8c6;
}
.doc-tab.current {
  background-color: #525250;
  color: #ececea;
}
.doc-tab.current button {
  color: #fff;
}
.viewport {
  flex: 1;
  display: flex;
  min-height: 0;
}
.canvas {
  position: relative;
  flex: 1;
  display: flex;
  padding: 101px 35px 100px 37px;
  background-color: #5f5f5d;
}
.artboard {
  flex: 1;
  border: 1px solid #111;
  background-color: #fffffd;
  overflow: hidden;
}
.toast {
  position: absolute;
  top: 50px;
  left: 619px;
  padding: 6px 7px;
  border: 1px solid #c8c8c6;
  border-radius: 4px;
  background-color: #b0b0ae;
  color: #111;
  font-size: 18px;
  line-height: 22px;
}
.scroll-v, .scroll-h {
  display: flex;
  align-items: center;
  justify-content: space-between;
  background-color: #4a4a48;
  color: #aaaaa8;
}
.scroll-v {
  flex-direction: column;
  width: 24px;
  padding: 8px 0;
}
.scroll-v .thumb {
  width: 23px;
  height: 38px;
  border-radius: 12px;
  background-color: #5c5c5a;
}

/* status bar, runs past the bottom edge of the window */
.status {
  flex: none;
  display: flex;
  height: 30px;
  margin-bottom: -12px;
  padding: 1px 24px 0 5px;
  background-color: #525250;
}
.combo {
  display: flex;
  border: 1px solid #60605e;
  background-color: #444442;
  color: #ececea;
  font-size: 15px;
}
.combo input {
  flex: 1;
  width: 0;
  padding: 0 4px 2px;
}
.combo button {
  width: 27px;
  border-left: 1px solid #60605e;
}
.combo.zoom {
  width: 103px;
}
.combo.page {
  width: 88px;
}
.pager {
  display: flex;
  align-items: center;
  justify-content: center;
  gap: 14px;
  width: 62px;
  color: #737371;
}
.status-text {
  width: 300px;
  border-left: 1px solid #474745;
  border-right: 1px solid #474745;
  font-size: 17px;
  line-height: 28px;
  text-align: center;
}
.play {
  width: 27px;
}
.scroll-h {
  flex: 1;
  margin-top: -1px;
  padding: 0 8px;
}
.scroll-h .thumb {
  width: 38px;
  height: 26px;
  border-radius: 12px;
  background-color: #5c5c5a;
}

/* right side */
.side {
  flex: none;
  display: flex;
  flex-direction: column;
  width: 440px;
  border-left: 3px solid #333331;
}
.side-strip {
  display: flex;
  justify-content: space-between;
  padding: 4px 8px 0 37px;
}
.side-body {
  flex: 1;
  display: flex;
  min-height: 0;
}
.dock {
  width: 62px;
  border-right: 4px solid #333331;
}
.dock-group {
  padding-bottom: 1px;
  border-bottom: 1px solid #3c3c3a;
}
.dock-group button {
  width: 58px;
  height: 43px;
}
.dock-group button svg {
  width: 57px;
  height: 43px;
}
.properties {
  flex: 1;
}
.prop-tabs {
  display: flex;
  height: 41px;
  background-color: #424240;
  font-size: 18px;
}
.prop-tabs button {
  width: 59px;
  padding-bottom: 2px;
  padding-right: 12px;
  border-right: 1px solid #3a3a38;
  color: #a8a8a6;
}
.prop-tabs .current {
  width: 64px;
  padding-right: 0;
  background-color: #525250;
  color: #fff;
}
.prop {
  padding: 0 16px 0 15px;
  border-bottom: 1px solid #4a4a48;
}
.prop:last-child {
  border-bottom: none;
}
.anchor-type {
  padding-top: 15px;
  padding-bottom: 15px;
}
.transform {
  padding-top: 12px;
  padding-bottom: 15px;
}
.transform-grid {
  display: grid;
  grid-template-columns: 43px 26px 86px 52px 86px 1fr;
  grid-template-rows: 32px 32px 32px;
  row-gap: 7px;
  align-items: center;
  margin-top: 14px;
}
.transform-grid label {
  padding-top: 2px;
  padding-right: 7px;
  text-align: right;
  font-family: "Noto Sans CJK TC", "Noto Sans CJK SC", sans-serif;
  white-space: nowrap;
}
.transform-grid label[for="p-w"], .transform-grid label[for="p-h"] {
  padding-right: 0;
}
.ref {
  grid-row: 1 / 3;
  color: #c8c8c6;
}
.prop-link {
  grid-row: 1 / 3;
  grid-column: 6;
}
.transform-grid .angle {
  grid-column: 1 / 3;
  display: flex;
  justify-content: flex-end;
}
.transform-grid .field select {
  flex: 1;
  padding: 0 0 1px 4px;
  opacity: 1;
}
.transform-grid .field.disabled svg {
  align-self: center;
  margin-right: 9px;
}
.flips {
  grid-column: 4 / 6;
  display: flex;
  align-items: center;
  gap: 24px;
  padding: 3px 0 0 58px;
}
.more {
  margin: 15px 4px 0 auto;
  color: #c8c8c6;
}
.appearance {
  padding-top: 13px;
  padding-bottom: 17px;
}
.appearance .row {
  display: flex;
  align-items: center;
  height: 32px;
  margin-bottom: 12px;
}
.appearance h3 + .row {
  margin-top: 12px;
}
.name {
  margin-left: 18px;
  line-height: 18px;
}
.appearance .field {
  width: 104px;
  margin-left: auto;
  margin-right: 122px;
}
.fx {
  align-items: flex-end;
  margin: 17px 0 0 8px;
  font-family: "Open Sans", "Noto Sans", sans-serif;
  font-size: 20px;
  font-style: italic;
}
.fx svg {
  margin-bottom: 3px;
}
.appearance .more {
  margin-top: 22px;
}
.icons {
  display: flex;
  align-items: center;
  height: 55px;
}
.icons span {
  width: 52px;
  font-family: "Noto Sans CJK TC", "Noto Sans CJK SC", sans-serif;
}
.icons.convert {
  height: 61px;
  padding-top: 7px;
}
.icons .icon-btn {
  width: 43px;
}
.quick {
  padding-top: 12px;
}

/* overlays */
.mark-box {
  position: absolute;
  top: 410px;
  left: 504px;
  width: 101px;
  height: 81px;
  border: 3px solid #fb3939;
}
.mark-arrow {
  position: absolute;
  top: 148px;
  left: 604px;
}
.watermark {
  position: absolute;
  left: 1475px;
  top: 876px;
  color: #cdcdcc;
}
.wm-brand {
  display: flex;
  align-items: flex-end;
  height: 110px;
}
.wm-bai {
  font-family: "Liberation Sans", Arial, sans-serif;
  font-size: 76px;
  font-weight: bold;
  line-height: 76px;
  height: 69px;
}
.wm-paw {
  fill: #cdcdcc;
}
.wm-paw text {
  fill: #525250;
  font-family: "Liberation Sans", Arial, sans-serif;
  font-size: 50px;
  font-weight: bold;
}
.wm-cn {
  font-size: 57px;
  font-weight: 900;
  line-height: 66px;
}
.wm-url {
  margin-top: 4px;
  color: #dededc;
  font-family: "Noto Sans", sans-serif;
  font-size: 39px;
  font-weight: 500;
  line-height: 46px;
}
.meter {
  position: absolute;
  right: 3px;
  top: 938px;
  display: flex;
  align-items: flex-end;
  width: 14px;
  height: 90px;
  padding: 2px;
  border: 2px solid #c4c4c2;
  border-radius: 5px;
  background-color: #1c1c1c;
}
.meter-level {
  flex: 1;
  height: 50px;
  background: repeating-linear-gradient(#3f8a5c 0 2px, #17301f 2px 3px);
}
```
